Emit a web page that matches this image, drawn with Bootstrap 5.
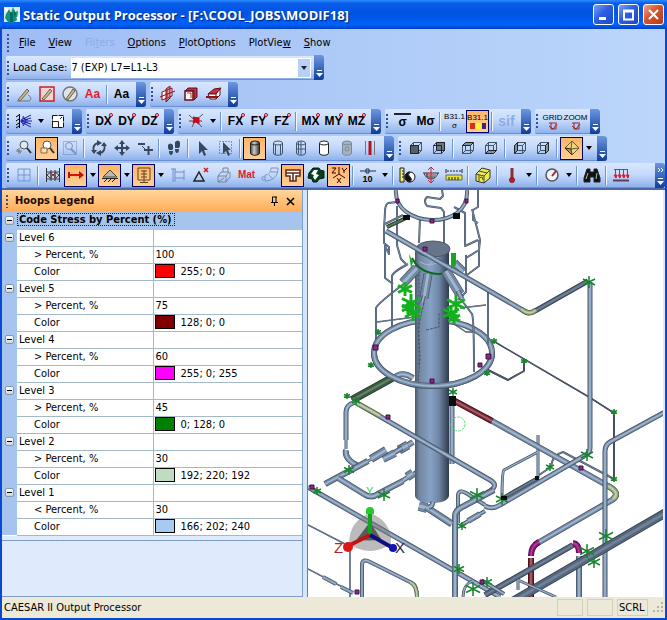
<!DOCTYPE html>
<html lang="en">
<head>
<meta charset="utf-8">
<meta name="viewport" content="width=device-width, initial-scale=1">
<title>Static Output Processor</title>
<link rel="stylesheet" href="https://cdn.jsdelivr.net/npm/bootstrap@5.3.0/dist/css/bootstrap.min.css">
<style>
:root{--ui:"DejaVu Sans Condensed","Noto Sans",sans-serif}
body{font:11px/16px var(--ui);color:#000;background:#a9c6f4}
button,select{font:inherit;color:inherit}
.titlebar{height:29px;background:linear-gradient(#2a8bff 0,#0a5ce8 12%,#0053e1 45%,#0062fb 85%,#0040c0 100%);color:#fff;padding:0 3px 0 4px}
.titlebar h1{font:bold 13px/20px "Open Sans","Noto Sans",sans-serif;text-shadow:1px 1px 1px #00237a;margin:0 0 0 3px}
.winbtn{width:21px;height:21px;border:1px solid #fff;border-radius:3px;padding:0;background:linear-gradient(135deg,#7ba2f7,#2c5fe0 45%,#1a49c8);display:flex;align-items:center;justify-content:center}
.winbtn.shut{background:linear-gradient(135deg,#f0a48c,#d8512c 45%,#b93a18)}
.workarea{border:solid #0a48cf;border-width:0 2px 2px}
.bars{background:linear-gradient(90deg,#9ebdf5,#bcd6fa);padding-left:4px;border-bottom:2px solid #4a68ab}
.menurow{height:27px}
.menurow button{border:0;background:none;padding:0;white-space:nowrap}
.menurow u{text-underline-offset:1px}
.menulist{gap:13px;padding-left:7px}
.grip{width:6px;align-self:stretch;margin:4px 0;flex:none;background:radial-gradient(circle,#33528f 0 1px,transparent 1px) 0 0/4px 4px repeat-y}
.strip{height:25px;background:linear-gradient(#d9e7fd,#c3d8fa 50%,#8fb2ec);border-bottom:1px solid #6a8fd2;border-radius:2px;display:flex;align-items:center}
.strip.casebar{height:24px}
.casebar label{margin:0 4px 0 1px}
.stripe-row{display:flex;gap:4px;margin-bottom:2px}
.tb{width:23px;height:23px;flex:none;padding:0;border:1px solid transparent;background:none;display:flex;align-items:center;justify-content:center;position:relative;white-space:nowrap}
.tb.on{border-color:#00006a;background:linear-gradient(#ffb566,#ffcf96)}
.tb svg{width:18px;height:18px;fill:none;stroke:#222;stroke-width:1;flex:none}
.tb svg.low{height:8px}
.tb svg.f-shade{fill:url(#cg)}
.tb svg.f-line{stroke:#43566c}
.tb svg.f-white{fill:#fff}
.tb svg.f-clear{fill:#a7b2bf;stroke:#78889a}
.dd{width:11px;height:23px;flex:none;border:0;background:none;padding:0;display:flex;align-items:center;justify-content:center}
.dd::after{content:"";border:3px solid transparent;border-top:4px solid #000;border-bottom:0}
.vsep{width:2px;height:19px;margin:0 2px;flex:none;border-left:1px solid #6f94d4;border-right:1px solid #eef5ff}
.more{width:10px;height:25px;flex:none;margin-left:3px;border:0;padding:0 0 3px;border-radius:0 3px 3px 0;background:linear-gradient(#6d97e2,#103d98);display:flex;flex-direction:column;align-items:center;justify-content:end}
.more svg{width:7px;height:8px;flex:none}
.more.far{justify-content:space-between;padding-top:4px}
.tx{font:bold 12px/14px "Liberation Sans",sans-serif}
.tx i{position:absolute;right:1px;top:2px;width:4px;height:4px;border:1px solid #c00020;border-radius:50%}
.tn{font:bold 9px/9px "Liberation Sans",sans-serif;flex-direction:column}
.tn.slim{font:8px/9px "Liberation Sans",sans-serif}
.tx.large{font-size:14px}
.tx.tiny{font-size:10px}
.red{color:#e21c2c}
.dim{color:#8aaee4}
.combo{width:240px;height:20px;border:0;background:#fff;padding:0 18px 0 0;appearance:none;line-height:16px}
.combowrap{position:relative}
.combowrap span{position:absolute;right:1px;top:1px;width:12px;height:18px;background:#b9d0f6;display:flex;align-items:center;justify-content:center;pointer-events:none}
.combowrap span::after{content:"";border:3px solid transparent;border-top:4px solid #223;border-bottom:0}
.content-row{background:#d5e5fb}
.legend{width:301px;flex:none;background:#dfebfc;border-right:1px solid #7f9ec8}
.legend-head{height:22px;background:linear-gradient(#ffd69b,#ffac57);padding:0 4px 0 3px}
.legend-head h2{font:bold 11px/16px var(--ui);margin:0;color:#1c0a00}
.legend-head button{border:0;background:none;padding:0;width:16px;height:16px;display:flex;align-items:center;justify-content:center}
.props{width:100%;table-layout:fixed;border-collapse:collapse;background:#fff}
.gutcol{width:15px}
.keycol{width:136px}
.props td,.props th{height:17px;line-height:16px;padding:0 0 0 2px;border-bottom:1px solid #a3b9c8;font-weight:400;white-space:nowrap;overflow:hidden}
.props .gut{background:#a6c5ee;padding:0 0 0 3px;vertical-align:middle}
.props .sub{padding-left:17px}
.props td{border-left:1px solid #a3b9c8}
.props .cat th{background:#a6c5ee;font-weight:700;padding:0;border-color:#a6c5ee}
.props .cat span{outline:1px dotted #123;outline-offset:-1px;padding:0 3px 0 2px}
.fold{width:9px;height:9px;border:1px solid #8497ad;border-radius:2px;padding:0;background:linear-gradient(#fff,#cfd3d8);display:flex;align-items:center;justify-content:center}
.fold::after{content:"";width:5px;height:1px;background:#000}
.chip{display:inline-block;width:20px;height:14px;border:1px solid #000;vertical-align:-3px;margin:0 6px 0 -1px}
.c6{background:#f00}.c5{background:#800000}.c4{background:#f0f}.c3{background:#008000}.c2{background:#c0dcc0}.c1{background:#a6caf0}
.hintbox{border:1px solid #7f9ec8;border-right:0;border-left:0;margin-top:4px;background:#dfebfc}
.view{margin-left:4px;border-left:1px solid #6b7f9d;background:#fff;border-right:2px solid #dceafe;min-width:0}
.view svg{display:block;width:100%;height:100%}
.statusrow{height:21px;background:#ece9d8;padding-left:2px}
.cell{border:1px solid #d3cfbb;height:17px;width:26px}
.cell.wide{width:31px;padding-left:1px}
</style>
<script src="https://cdn.jsdelivr.net/npm/bootstrap@5.3.0/dist/js/bootstrap.bundle.min.js"></script>
</head>
<body>
<svg width="0" height="0" class="position-absolute" aria-hidden="true">
<defs>
<symbol id="m" viewBox="0 0 7 8"><path d="M1 1h5v1H1z" fill="#fff"/><path d="M0 4h7L3.500 8z" fill="#fff"/></symbol>
<symbol id="cube" viewBox="0 0 18 18"><path d="M3.500 6.500h8v8h-8zM3.500 6.500l3-3h8v8l-3 3M11.500 6.500l3-3M6.500 3.500v8h8M3.500 14.500l3-3" stroke="#435466"/></symbol>
<symbol id="cyl" viewBox="0 0 18 18"><path d="M4.500 4v10c0 3 9 3 9 0V4"/><ellipse cx="9" cy="4" rx="4.500" ry="2"/></symbol>
<linearGradient id="cg"><stop offset="0" stop-color="#444"/><stop offset=".4" stop-color="#ccc"/><stop offset="1" stop-color="#333"/></linearGradient>
<linearGradient id="col"><stop offset="0" stop-color="#49586a"/><stop offset=".12" stop-color="#7286a0"/><stop offset=".45" stop-color="#87a2c5"/><stop offset=".7" stop-color="#6f87a6"/><stop offset="1" stop-color="#2f3b4d"/></linearGradient>
</defs>
</svg>
<div class="d-flex flex-column min-vh-100">
<header class="titlebar d-flex align-items-center">
<svg width="16" height="17" viewBox="0 0 16 17"><path d="M0 1h16v15H0z" fill="#d8ece4"/><path d="M2 8l3-5 2 4 2-6 2 5 3-1-1 9-4 3-5-1-3-4z" fill="#12937f"/><path d="M6 6l3 1v9H6zM10 4l2 4-2 3z" fill="#056a5e"/><path d="M1 2l4 1-3 4zM12 12l4-4v7z" fill="#fff"/></svg>
<h1 class="flex-grow-1 text-nowrap">Static Output Processor - [F:\COOL_JOBS\MODIF18]</h1>
<div class="d-flex gap-1 flex-shrink-0">
<button class="winbtn" aria-label="Minimize"><svg width="15" height="15"><path d="M3 10h7v3H3z" fill="#fff"/></svg></button>
<button class="winbtn" aria-label="Maximize"><svg width="15" height="15"><path d="M3 3.500h9v9H3zM3 4.500h9" fill="none" stroke="#fff" stroke-width="2"/></svg></button>
<button class="winbtn shut" aria-label="Close"><svg width="15" height="15"><path d="M3 3l9 9M12 3l-9 9" stroke="#fff" stroke-width="2"/></svg></button>
</div>
</header>
<div class="workarea flex-grow-1 d-flex flex-column">
<div class="bars">
<nav class="menurow d-flex align-items-center" aria-label="Main menu">
<span class="grip"></span>
<div class="menulist d-flex">
<button><u>F</u>ile</button><button><u>V</u>iew</button><button disabled class="dim">Fil<u>t</u>ers</button><button><u>O</u>ptions</button><button><u>P</u>lotOptions</button><button>PlotVie<u>w</u></button><button><u>S</u>how</button>
</div>
</nav>
<div class="stripe-row"><div class="strip casebar"><span class="grip"></span><label for="loadcase" class="text-nowrap">Load Case:</label>
<div class="combowrap d-flex"><select id="loadcase" class="combo"><option>7 (EXP) L7=L1-L3</option></select><span></span></div>
<button class="more" aria-label="More load case commands"><svg><use href="#m"/></svg></button></div></div>

<div class="stripe-row">
<div class="strip" role="toolbar"><span class="grip"></span>
<button class="tb" aria-label="Annotate"><svg viewBox="0 0 18 18"><path d="M3 15l9-11 2 2-9 10z" fill="#c9b38c" stroke="#6b6553"/><path d="M2 16h12c3-1 2-5-1-6" stroke="#777"/></svg></button>
<button class="tb" aria-label="Annotate box"><svg viewBox="0 0 18 18"><path d="M2 2h14v14H2z" fill="#f3d4d4" stroke="#c3202e" stroke-width="1.500"/><path d="M4 14l8-10 2 2-8 9z" fill="#c9b38c" stroke="#6b6553"/></svg></button>
<button class="tb" aria-label="Annotate circle"><svg viewBox="0 0 18 18"><circle cx="9" cy="9" r="7" stroke="#777" stroke-width="1.500" fill="#dfe3ea"/><path d="M5 14l7-10 2 2-7 9z" fill="#c9b38c" stroke="#6b6553"/></svg></button>
<button class="tb tx red">Aa</button><span class="vsep"></span><button class="tb tx">Aa</button>
<button class="more" aria-label="More"><svg><use href="#m"/></svg></button></div>
<div class="strip" role="toolbar"><span class="grip"></span>
<button class="tb" aria-label="Cut X"><svg viewBox="0 0 18 18" stroke-width="1.500"><path d="M3 7l5-2v8l-5 2zM8 5l5-2v8l-5 2" fill="#fff" stroke="#88131b"/><path d="M7 4l4-3v12l-4 4z" fill="#bd3140" fill-opacity=".5" stroke="#88131b"/><path d="M1 12l15-6" stroke="#88131b"/></svg></button>
<button class="tb" aria-label="Cut Y"><svg viewBox="0 0 18 18"><path d="M6 3h9v9l-3 3V6H3l3-3" fill="#bd3140" stroke="#6b0d16"/><path d="M3 6h8v9H3z" fill="#fff" stroke="#6b0d16" stroke-width="1.500"/><path d="M5 8h4v5" stroke="#a33"/></svg></button>
<button class="tb" aria-label="Cut Z"><svg viewBox="0 0 18 18"><path d="M3 9l6-5 7-1-5 6z" fill="#c9303e" stroke="#6b0d16"/><path d="M3 9h8v5H5zM11 9l4-5v6l-4 4" fill="#fff" stroke="#6b0d16"/><path d="M1 12h12" stroke="#88131b" stroke-width="2"/></svg></button>
<button class="more" aria-label="More"><svg><use href="#m"/></svg></button></div>
</div>

<div class="stripe-row">
<div class="strip" role="toolbar"><span class="grip"></span>
<button class="tb" aria-label="Restraints"><svg viewBox="0 0 18 18"><path d="M4.500 2v14M1 5l3-2M1 9l3-2M1 13l3-2M1 16l3-2" stroke="#000"/><path d="M5 9h12M6 8l10-5M6 10l10 5M7 6l6 2M7 12l6-2M8 4l3 5-3 5M6 9l10-3M6 9l10 3" stroke="#1c1cae"/></svg></button><button class="dd" aria-label="Restraint list"></button>
<button class="tb" aria-label="Displaced shape"><svg viewBox="0 0 18 18"><path d="M3.500 3.500h11v12h-11z" fill="#fff" stroke="#111" stroke-dasharray="5 1"/><path d="M3.500 9.500h6v6h-6z"/><path d="M11 7l2-2" stroke="#111"/></svg></button>
<button class="more" aria-label="More"><svg><use href="#m"/></svg></button></div>
<div class="strip" role="toolbar"><span class="grip"></span>
<button class="tb tx">DX<i></i></button><button class="tb tx">DY<i></i></button><button class="tb tx">DZ<i></i></button>
<button class="more" aria-label="More"><svg><use href="#m"/></svg></button></div>
<div class="strip" role="toolbar"><span class="grip"></span>
<button class="tb" aria-label="Forces"><svg viewBox="0 0 18 18"><path d="M2 3l13 12M16 2l-8 7-3 6" stroke="#555"/><path d="M6 5l6 1v6l-3-2-3 1 1-3z" fill="#c00b1c" stroke="#c00b1c"/><path d="M2 9h13" stroke="#c00b1c"/></svg></button><button class="dd" aria-label="Force list"></button><span class="vsep"></span>
<button class="tb tx">FX<i></i></button><button class="tb tx">FY<i></i></button><button class="tb tx">FZ<i></i></button><span class="vsep"></span>
<button class="tb tx">MX<i></i></button><button class="tb tx">MY<i></i></button><button class="tb tx">MZ<i></i></button>
<button class="more" aria-label="More"><svg><use href="#m"/></svg></button></div>
<div class="strip" role="toolbar"><span class="grip"></span>
<button class="tb tx"><span class="border-top border-2 border-dark px-1">σ</span></button><button class="tb tx">Mσ</button><span class="vsep"></span>
<button class="tb tn slim"><span>B31.1</span><span>σ</span></button>
<button class="tb tn slim on"><span>B31.1</span><svg class="low" viewBox="0 0 18 8"><path d="M1 1h5v6H1z" fill="#d33020" stroke="none"/><path d="M7 1h5v6H7z" fill="#fff13c" stroke="none"/><path d="M13 1h4v6h-4z" fill="#3b2090" stroke="none"/></svg></button><span class="vsep"></span>
<button class="tb tx large dim" disabled>sif</button>
<button class="more" aria-label="More"><svg><use href="#m"/></svg></button></div>
<div class="strip" role="toolbar"><span class="grip"></span>
<button class="tb tn slim"><span>GRID</span><svg class="low" viewBox="0 0 18 8"><path d="M5 1h8M7 1v6h5V2M5 4l4 3 4-5" stroke="#a1202a"/></svg></button>
<button class="tb tn slim"><span>ZOOM</span><svg class="low" viewBox="0 0 18 8"><path d="M5 1h8M7 1v6h5V2M5 4l4 3 4-5" stroke="#a1202a"/></svg></button>
<button class="more" aria-label="More"><svg><use href="#m"/></svg></button></div>
</div>

<div class="stripe-row">
<div class="strip" role="toolbar"><span class="grip"></span>
<button class="tb" aria-label="Zoom"><svg viewBox="0 0 18 18"><circle cx="9" cy="6" r="4" fill="#dce8f8" stroke="#555"/><path d="M12 9l4 5" stroke="#333" stroke-width="2"/><path d="M1 12h6M4 9v6M2 10l4 4" stroke="#777"/></svg></button>
<button class="tb on" aria-label="Zoom window"><svg viewBox="0 0 18 18"><circle cx="9" cy="6" r="4" fill="#fff" stroke="#555"/><path d="M12 9l4 5" stroke="#333" stroke-width="2"/><path d="M3 9h6v5H3z" fill="#ffe0a0" stroke="#865"/></svg></button>
<button class="tb" aria-label="Zoom extents"><svg viewBox="0 0 18 18" ><path d="M2.500 2.500h13v13h-13z" stroke="#6d87b4" stroke-dasharray="1 1"/><circle cx="8" cy="7" r="3.500" stroke="#7c93bb"/><path d="M10 10l5 5" stroke="#7c93bb" stroke-width="2"/></svg></button><span class="vsep"></span>
<button class="tb" aria-label="Orbit"><svg viewBox="0 0 18 18"><path d="M4 12a5.500 5.500 0 0 1 4-8M14 6a5.500 5.500 0 0 1-4 8" stroke="#37485a" stroke-width="2"/><path d="M7 1l5 3-5 3zM11 17l-5-3 5-3zM1 11l3 4 3-4zM17 7l-3-4-3 4z" fill="#37485a" stroke="none"/></svg></button>
<button class="tb" aria-label="Pan"><svg viewBox="0 0 18 18"><path d="M9 3v12M3 9h12" stroke="#37485a" stroke-width="2"/><path d="M9 1l3 4H6zM9 17l3-4H6zM1 9l4-3v6zM17 9l-4-3v6z" fill="#37485a" stroke="none"/></svg></button>
<button class="tb" aria-label="Zoom in or out"><svg viewBox="0 0 18 18"><path d="M2 5h7M8 11h9M12.500 7v9" stroke="#37485a" stroke-width="2"/><path d="M6 7l4 4" stroke="#37485a"/></svg></button><span class="vsep"></span>
<button class="tb" aria-label="Walk"><svg viewBox="0 0 18 18"><path d="M3 6q2-3 5 0v4l-1 1H4L3 9zM4 12h4q0 4-2 4t-2-4M10 3q3-3 5 0v4l-1 2h-4zM10 10h4q0 4-2 4t-2-4" fill="#37485a" stroke="none"/></svg></button><span class="vsep"></span>
<button class="tb" aria-label="Select"><svg viewBox="0 0 18 18"><path d="M5 2l9 9H10l2 5-2 1-2-5-3 3z" fill="#37485a" stroke="none"/></svg></button>
<button class="tb" aria-label="Select area"><svg viewBox="0 0 18 18"><path d="M2.500 2.500h12v12h-12z" stroke="#37485a" stroke-dasharray="1 2"/><path d="M6 3l8 8h-3l2 5-2 1-2-5-3 3z" fill="#37485a" stroke="none"/></svg></button><span class="vsep"></span>
<button class="tb on" aria-label="Shaded"><svg class="f-shade"><use href="#cyl"/></svg></button>
<button class="tb" aria-label="Outline"><svg class="f-line"><use href="#cyl"/><path d="M6.500 6v10M11.500 6v10"/></svg></button>
<button class="tb" aria-label="Wireframe"><svg class="f-line"><use href="#cyl"/><path d="M9 2v14M5 10h8M6.500 3v12"/></svg></button>
<button class="tb" aria-label="Hidden line"><svg class="f-white"><use href="#cyl"/></svg></button>
<button class="tb" aria-label="Translucent"><svg class="f-clear"><use href="#cyl"/><circle cx="9" cy="10" r="2"/></svg></button>
<button class="tb" aria-label="Center line"><svg viewBox="0 0 18 18"><path d="M4.500 2v14M13.500 2v14" stroke="#777"/><path d="M9 2v14" stroke="#b5121f" stroke-width="3"/></svg></button>
<button class="more" aria-label="More"><svg><use href="#m"/></svg></button></div>
<div class="strip" role="toolbar"><span class="grip"></span>
<button class="tb" aria-label="Front view"><svg><use href="#cube"/><path d="M3.500 6.500h8v8h-8z" fill="#51606e"/></svg></button>
<button class="tb" aria-label="Back view"><svg><use href="#cube"/><path d="M6.500 3.500h8v8h-8z" fill="#68788a"/><path d="M3.500 6.500h8v8"/></svg></button><span class="vsep"></span>
<button class="tb" aria-label="Top view"><svg><use href="#cube"/><path d="M3.500 6.500l3-3h8l-3 3z" fill="#8293a8"/></svg></button>
<button class="tb" aria-label="Bottom view"><svg><use href="#cube"/><path d="M3.500 14.500l3-3h8l-3 3z" fill="#8293a8"/></svg></button><span class="vsep"></span>
<button class="tb" aria-label="Left view"><svg><use href="#cube"/><path d="M3.500 6.500l3-3v8l-3 3z" fill="#7e8fa3"/></svg></button>
<button class="tb" aria-label="Right view"><svg><use href="#cube"/><path d="M11.500 6.500l3-3v8l-3 3z" fill="#8293a8"/></svg></button><span class="vsep"></span>
<button class="tb on" aria-label="Isometric view"><svg viewBox="0 0 18 18"><path d="M9 2l7 7-7 7-7-7z" fill="#f2d27b" stroke="#665a3a"/><path d="M2 9l6 1 1 6z" fill="#bfa04c"/><path d="M8 10l8-1M9 2l-1 8 1 6" stroke="#665a3a"/></svg></button><button class="dd" aria-label="View list"></button>
<button class="more" aria-label="More"><svg><use href="#m"/></svg></button></div>
</div>

<div class="d-flex"><div class="strip flex-grow-1" role="toolbar"><span class="grip"></span>
<button class="tb" aria-label="Viewports"><svg viewBox="0 0 18 18"><path d="M3 3h12v12H3zM3 9h12M9 3v12" stroke="#7396d2"/></svg></button><span class="vsep"></span>
<button class="tb" aria-label="Anchors"><svg viewBox="0 0 18 18"><path d="M2.500 2v14M15.500 2v14M7 4v11M11 4v11" stroke="#333"/><path d="M2 6h14M2 13h14M3 9l4-3v7zM15 9l-4-3v7z" stroke="#444"/><path d="M7 7l4 4M7 11l4-4" stroke="#b22"/></svg></button>
<button class="tb on" aria-label="Displacements"><svg viewBox="0 0 18 18"><path d="M2 9h14" stroke="#d5140d" stroke-width="2"/><path d="M12 5l5 4-5 4zM1 6h2v6H1z" fill="#b9170d" stroke="none"/></svg></button><button class="dd" aria-label="Displacement list"></button>
<button class="tb on" aria-label="Supports"><svg viewBox="0 0 18 18"><path d="M9 4l7 7H2z" fill="#b9b9b0" stroke="#444"/><path d="M1 12.500h16M3 16l3-3M7 16l3-3M11 16l3-3" stroke="#222"/></svg></button><button class="dd" aria-label="Support list"></button>
<button class="tb on" aria-label="Hangers"><svg viewBox="0 0 18 18"><path d="M3 2h12v12H3zM6 5h6M6 8h6M6 11h6M9 4v13M5 16.500h8" stroke="#5c461c"/></svg></button><button class="dd" aria-label="Hanger list"></button>
<button class="tb" aria-label="Nozzles"><svg viewBox="0 0 18 18"><path d="M4 3v13M6 3v13M6 6h9M6 12h9M15 4v10M2 3h5" stroke="#6f90c8"/></svg></button>
<button class="tb" aria-label="Forces"><svg viewBox="0 0 18 18"><path d="M7 6l5 9H2z" stroke="#222" stroke-width="1.500"/><path d="M12 2l4 4M16 2l-4 4" stroke="#d31820" stroke-width="1.500"/></svg></button>
<button class="tb" aria-label="Flanges"><svg viewBox="0 0 18 18"><path d="M3 10h8v6H3zM3 10l3-4h8l-3 4M11 16l4-5V6M8 6V2h5v4M9 12l-6 4" stroke="#7a8699"/></svg></button>
<button class="tb tx tiny red">Mat</button>
<button class="tb" aria-label="Bends"><svg viewBox="0 0 18 18"><path d="M10 2h7c0 8-5 13-13 13v-6c4 0 6-3 6-7M10 6h7M8 9l4 4M4 11H1v3h3" stroke="#7c97c8"/></svg></button>
<button class="tb on" aria-label="Tees"><svg viewBox="0 0 18 18"><path d="M2 4h14v6h-4v5H6v-5H2zM2 7h14M9 7v8" fill="#fff" stroke="#5c2b18" stroke-width="1.500"/></svg></button>
<button class="tb" aria-label="Refresh"><svg viewBox="0 0 18 18"><path d="M2 7l4-5h6l1 2 4 1v7l-5 1-2 3H6l-1-3-4-1z" fill="#063f18" stroke="#021"/><path d="M7 4h4l-2 4 3 1-4 5-2-3 1-2-3-1z" fill="#fff" stroke="none"/></svg></button>
<button class="tb on" aria-label="Axes"><svg viewBox="0 0 18 18"><path d="M2 2h4L2 7h4M12 2l2 3 3-3M14 5v2M9 1v7L3 12M9 8l6 4M7 12l4 5M11 12l-4 5" stroke="#300"/></svg></button><span class="vsep"></span>
<button class="tb tn"><svg class="low" viewBox="0 0 18 8"><path d="M1 4h16M7 2h3v4H7z" stroke="#234"/></svg><span>10</span></button><button class="dd" aria-label="Node list"></button><span class="vsep"></span>
<button class="tb" aria-label="Scale"><svg viewBox="0 0 18 18"><path d="M1 2h4v14H1z" fill="#eef25a" stroke="#222"/><path d="M3 5h2M3 8h2M3 11h2" /><circle cx="11" cy="11" r="5" fill="#fff" stroke="#111"/><path d="M11 6a5 5 0 0 0 0 10q3-3 0-5t0-5" fill="#111"/></svg></button>
<button class="tb" aria-label="Section"><svg viewBox="0 0 18 18"><path d="M1 7h16M2 7q2 6 7 6t7-6M5 7v4h8" stroke="#333"/><path d="M9 1v16M6 4l3-3 3 3M6 14l3 3 3-3M4 9h10" stroke="#c72430"/></svg></button>
<button class="tb" aria-label="Distance"><svg viewBox="0 0 18 18"><path d="M2 5h14" stroke="#222" stroke-dasharray="2 1"/><path d="M1 3v4M17 3v4"/><path d="M1 9h16v5H1z" fill="#e8e43a" stroke="#665"/><path d="M4 11v3M7 11v3M10 11v3M13 11v3"/></svg></button><span class="vsep"></span>
<button class="tb" aria-label="Model"><svg viewBox="0 0 18 18"><path d="M2 8l6-6 8 2v8l-6 5-8-2z" fill="#ebea49" stroke="#333"/><path d="M2 8l8 2v7M10 10l6-6M5 5l8 2M6 12q2-3 3 2M5 9v6" stroke="#444"/></svg></button><span class="vsep"></span>
<button class="tb" aria-label="Temperature"><svg viewBox="0 0 18 18"><path d="M9 2v12" stroke="#8b3039" stroke-width="3"/><circle cx="9" cy="14" r="2.500" fill="#be1a28" stroke="#8b1a22"/></svg></button><button class="dd" aria-label="Temperature list"></button><span class="vsep"></span>
<button class="tb" aria-label="Pressure"><svg viewBox="0 0 18 18"><circle cx="9" cy="9" r="6" fill="#eef2fa" stroke="#555" stroke-width="1.500"/><path d="M9 10l4-5" stroke="#b1202a" stroke-width="2"/></svg></button><button class="dd" aria-label="Pressure list"></button><span class="vsep"></span>
<button class="tb" aria-label="Find"><svg viewBox="0 0 18 18"><path d="M4 3h3v3h4V3h3l3 9v4h-6v-5H7v5H1v-4z" fill="#111"/><path d="M3 13l2-6M13 13l1-6" stroke="#9cb"/></svg></button><span class="vsep"></span>
<button class="tb" aria-label="Uniform loads"><svg viewBox="0 0 18 18"><path d="M2 3.500h14M3.500 4v8M7.500 4v8M11.500 4v8M15.500 4v8" stroke="#d42435"/><path d="M2 9h3l-1 3zM6 9h3l-1 3zM10 9h3l-1 3zM14 9h3l-1 3z" fill="#d42435" stroke="#d42435"/><path d="M1 14.500h16" stroke="#623c54" stroke-width="2"/></svg></button>
<button class="more far ms-auto" aria-label="More"><svg viewBox="0 0 7 8"><path d="M1 1l2 2-2 2M4 1l2 2-2 2" stroke="#fff" fill="none"/></svg><svg><use href="#m"/></svg></button></div></div>
</div>

<main class="content-row flex-grow-1 d-flex">
<section class="legend d-flex flex-column">
<div class="legend-head d-flex align-items-center"><span class="grip"></span><h2 class="flex-grow-1 ps-1">Hoops Legend</h2>
<button aria-label="Pin"><svg width="9" height="10" fill="none" stroke="#000"><path d="M2.500 1v5M6 1v5M2 1h5M1 6.500h7M4.500 7v3"/></svg></button>
<button aria-label="Close legend"><svg width="9" height="9"><path d="M1 1l7 7M8 1L1 8" stroke="#000" stroke-width="1.500"/></svg></button></div>
<table class="props">
<colgroup><col class="gutcol"><col class="keycol"><col></colgroup>
<tbody>
<tr class="cat"><td class="gut border-0"><button class="fold" aria-label="Collapse all"></button></td><th colspan="2"><span>Code Stress by Percent (%)</span></th></tr>
<tr><td class="gut border-0"><button class="fold" aria-label="Collapse level 6"></button></td><th>Level 6</th><td></td></tr>
<tr><td class="gut border-0"></td><th class="sub">&gt; Percent, %</th><td>100</td></tr>
<tr><td class="gut border-0"></td><th class="sub">Color</th><td><span class="chip c6"></span>255; 0; 0</td></tr>
<tr><td class="gut border-0"><button class="fold" aria-label="Collapse level 5"></button></td><th>Level 5</th><td></td></tr>
<tr><td class="gut border-0"></td><th class="sub">&gt; Percent, %</th><td>75</td></tr>
<tr><td class="gut border-0"></td><th class="sub">Color</th><td><span class="chip c5"></span>128; 0; 0</td></tr>
<tr><td class="gut border-0"><button class="fold" aria-label="Collapse level 4"></button></td><th>Level 4</th><td></td></tr>
<tr><td class="gut border-0"></td><th class="sub">&gt; Percent, %</th><td>60</td></tr>
<tr><td class="gut border-0"></td><th class="sub">Color</th><td><span class="chip c4"></span>255; 0; 255</td></tr>
<tr><td class="gut border-0"><button class="fold" aria-label="Collapse level 3"></button></td><th>Level 3</th><td></td></tr>
<tr><td class="gut border-0"></td><th class="sub">&gt; Percent, %</th><td>45</td></tr>
<tr><td class="gut border-0"></td><th class="sub">Color</th><td><span class="chip c3"></span>0; 128; 0</td></tr>
<tr><td class="gut border-0"><button class="fold" aria-label="Collapse level 2"></button></td><th>Level 2</th><td></td></tr>
<tr><td class="gut border-0"></td><th class="sub">&gt; Percent, %</th><td>30</td></tr>
<tr><td class="gut border-0"></td><th class="sub">Color</th><td><span class="chip c2"></span>192; 220; 192</td></tr>
<tr><td class="gut border-0"><button class="fold" aria-label="Collapse level 1"></button></td><th>Level 1</th><td></td></tr>
<tr><td class="gut border-0"></td><th class="sub">&lt; Percent, %</th><td>30</td></tr>
<tr><td class="gut border-0"></td><th class="sub">Color</th><td><span class="chip c1"></span>166; 202; 240</td></tr>
</tbody></table>
<div class="hintbox flex-grow-1"></div>
</section>
<section class="view flex-grow-1" aria-label="Piping model">
<svg viewBox="308 190 355 407" fill="none" stroke-linejoin="round">
<g id="back"></g>
<g id="vessel">
<path d="M415 250V496q2 7 17 7t17-7V250z" fill="url(#col)"/>
<ellipse cx="433" cy="249" rx="17" ry="8" fill="#66758a" stroke="#4a586b"/>
<path d="M412 258q6 12 19 15t20-3" stroke="#0c6a1c" stroke-width="2"/>
<path d="M420 262q10 6 20-1M428 266l10-9" stroke="#a4b7cf"/>
<path d="M424 303l-6 25 2 30-2 26M426 330l13-3v-14M428 290l-6 12M419 270v95" stroke="#48566a" stroke-dasharray="3 1"/>
</g>
<g id="front"></g>
<g id="marks"></g>
<path d="M451 253h5v12l-5 4zM409 254l4 8-2 6z" fill="#15a722"/>
<circle cx="458" cy="424" r="7" stroke="#61dc76" stroke-dasharray="3 1"/>
<g fill="#8b2a86" stroke="#401044" stroke-width="1"><path d="M423 247h4v4h-4zM430 219h4v4h-4zM373 345h5v5h-5zM430 379h4v4h-4zM386 415h4v4h-4zM310 485h4v4h-4zM486 354h5v5h-5zM478 363h4v4h-4zM579 466h4v4h-4zM355 590h4v4h-4zM396 199h3v4h-3zM465 199h3v4h-3zM480 580h4v4h-4z"/></g>
<path d="M403 215h7v5h-7zM453 213h7v6h-7zM449 396h7v10h-7zM535 476h4v4h-4zM501 496h6v4h-6z" fill="#080e0c"/>
<path d="M370 513q22 8 21 31q-21 14-42 0q0-23 21-31z" fill="#777" fill-opacity=".5"/><path d="M370 522l11 17q-12 3-24 0z" fill="#444" fill-opacity=".8"/>
<path d="M370 535v-22" stroke="#12a51b" stroke-width="4"/><path d="M366 511a4 4 0 1 1 8 0v3h-8z" fill="#1fce2a"/>
<path d="M370 535l-22 11" stroke="#bd1514" stroke-width="4"/><circle cx="348" cy="547" r="5" fill="#df1413"/>
<path d="M370 535l23 13" stroke="#0e0d82" stroke-width="4"/><circle cx="393" cy="548" r="4" fill="#1414b4"/>
<g font-family="Liberation Sans, sans-serif" font-size="15"><text x="334" y="553" fill="#b32626">Z</text><text x="395" y="553" fill="#1c1c5a">X</text><text x="366" y="495" font-size="11" fill="#36d856">Y</text></g>
</svg>
</section>
</main>
<footer class="statusrow d-flex align-items-center gap-1"><span class="flex-grow-1">CAESAR II Output Processor</span><span class="cell"></span><span class="cell"></span><span class="cell wide lh-1 d-flex align-items-center">SCRL</span>
<svg width="13" height="13" fill="#b8b4a0"><path d="M9 1h2v2H9zM9 5h2v2H9zM9 9h2v2H9zM5 5h2v2H5zM5 9h2v2H5zM1 9h2v2H1z"/></svg></footer>
</div>
</div>
<script>
const NS='http://www.w3.org/2000/svg';
const tones={
 s:['#455364','#7388a1','#a0b6d0'],
 d:['#303b48','#56667a','#70819a'],
 g:['#16301a','#3a5a40','#64806a'],
 r:['#3c0a12','#7a2b38','#a8606a'],
 m:['#4a083e','#8c1478','#b6389e'],
 y:['#5a6e4c','#94a888','#c4d0b0']
};
function pipe(layer,w,d,tone='s'){
 const c=tones[tone],g=document.getElementById(layer);
 const rows=w<2.5?[[c[0],w],[c[1],w*.5]]:[[c[0],w],[c[1],w-1.4],[c[2],w*.3]];
 for(const [stroke,sw] of rows){
  const p=document.createElementNS(NS,'path');
  p.setAttribute('d',d);p.setAttribute('stroke',stroke);p.setAttribute('stroke-width',sw);g.append(p);
 }
}
// [layer, width, path, tone]
[
 ['back',2,'M442 190L443 196L440 199L427 197Q423 201 427 206L441 208L444 212V243'],
 ['back',2,'M420 218L419 243'],
 ['back',2,'M397 202L388 203Q385 205 385 212L384 229V243L389 247V254L385 246V278L393 284'],
 ['back',2,'M397 206V245L401 259L406 264M385 224L403 215'],
 ['back',2,'M392 328V276Q393 272 408 264'],
 ['back',2,'M376 344V308Q377 304 405 283'],
 ['back',1.5,'M377 322L415 317M460 308L486 305M451 322L466 332H480'],
 ['back',2,'M478 190V207L473 210V220L478 223M472 209L477 228L480 240L479 250L466 258M479 240V266L467 275'],
 ['back',2,'M454 207L465 213V246L478 240M466 255V292L458 300'],
 ['back',4,'M406 218L387 227','g'],
 ['back',4,'M396 190C393 228 470 232 467 190'],
 ['back',6,'M374 353a59 33 0 0 1 118 0a59 33 0 0 1 -118 0'],
 ['back',5,'M452 402V464'],
 ['back',6,'M413 442L405 447'],['back',9,'M408 445L399 450'],['back',5,'M402 448L392 454'],['back',8,'M395 453L383 459'],
 ['back',5,'M413 474L402 481M417 472L411 476'],['back',9,'M413 473L407 477'],
 ['front',6,'M413 378Q402 370 392 379'],
 ['front',8,'M392 378L352 400','g'],
 ['front',2,'M460 298L472 314Q474 318 474 372M488 290V345'],
 ['front',6,'M374 353a59 33 0 0 0 118 0'],
 ['front',10,'M417 268L403 283'],['front',9,'M428 274L424 298'],['front',10,'M446 271L460 294'],['front',5,'M458 291L462 299'],['front',4,'M424 296L422 303'],
 ['front',9,'M454 263L463 272'],
 ['front',5,'M386 231L526 312'],
 ['front',5,'M524 311Q529 315 535 311L588 281','d'],['front',5,'M521 309Q529 316 536 310','y'],
 ['front',1.5,'M495 342L589 397L614 413','d'],['front',2,'M614 413V480M524 362V371L508 380L488 370','d'],
 ['front',2,'M614 479L563 452Q552 455 551 467L539 475'],
 ['front',3,'M538 435V478M538 452L504 470Q502 472 502 498'],['front',4,'M503 498L538 478','d'],
 ['front',5,'M355 402Q346 405 346 412V440'],['front',3,'M346 440V449'],['front',6,'M346 450Q344 459 358 466'],
 ['front',6,'M325 484L368 461'],['front',3,'M368 461L376 457'],['front',8,'M371 459L386 450'],
 ['front',6,'M338 478L364 494Q371 499 378 494L403 481'],
 ['front',5,'M355 402L490 480Q499 485 490 491L485 494'],['front',5,'M355 402L380 416','y'],
 ['front',6,'M485 417L610 487Q621 494 612 500L536 544'],
 ['front',6,'M453 400L492 421','r'],['front',6,'M608 486Q621 493 613 499','y'],
 ['front',6,'M531 558V597','r'],['front',6,'M539 542Q531 546 531 556','m'],
 ['front',4,'M458 523V495Q459 489 466 493L485 505'],
 ['front',5,'M590 282V448Q590 453 584 456L500 505Q492 510 485 506'],
 ['front',4,'M460 526L485 511'],['front',6,'M468 521L480 514'],
 ['front',5,'M308 487L500 597'],
 ['front',6,'M455 597V516Q455 510 464 506L494 490'],
 ['front',10,'M419 506L427 508'],['front',7,'M426 507L452 524'],['front',5,'M429 507Q432 507 433 502'],
 ['front',1.5,'M308 525L345 544M350 550V597M308 569L352 592'],['front',4,'M323 577L336 584M341 587L353 593'],
 ['front',4,'M362 597V564Q363 558 370 562L412 583Q417 586 417 597'],['front',4,'M410 582Q417 585 417 597','y'],
 ['front',5,'M667 411L610 442Q605 445 605 452V597'],
 ['front',6,'M485 595L573 545','d'],['front',6,'M579 556V597'],['front',6,'M573 543Q579 544 579 553','m'],
 ['front',9,'M667 512L510 603','d'],
 ['front',3,'M518 590V580L556 597M463 597Q463 585 472 581'],
 ['front',4,'M485 582L504 594']
].forEach(a=>pipe(...a));
// green restraint symbols: x, y, size
const marks=document.getElementById('marks');
[[589,282,6],[405,289,7],[411,303,9],[413,313,8],[408,308,6],[456,304,9],[451,313,8],[454,318,6],[349,470,5],[356,401,4],[384,495,6],[477,495,7],[502,499,6],[587,455,6],[550,467,4],[614,412,3],[614,479,3],[524,361,3],[494,341,3],[487,373,3],[606,536,7],[587,551,7],[594,562,6],[378,332,3],[371,365,3],[347,396,3],[453,392,4],[317,491,4],[462,526,4],[459,569,5],[473,589,7],[487,582,5]].forEach(([x,y,s])=>{
 const p=document.createElementNS(NS,'path');
 p.setAttribute('d',`M${x-s} ${y-s/2}L${x+s} ${y+s/2}M${x+s} ${y-s/2}L${x-s} ${y+s/2}M${x} ${y-s}V${y+s}`);
 const bright=y<320&&x<460;
 p.setAttribute('stroke',bright?'#12b01c':'#16852c');p.setAttribute('stroke-width',bright?3:1.5);marks.append(p);
});
</script>
</body>
</html>
